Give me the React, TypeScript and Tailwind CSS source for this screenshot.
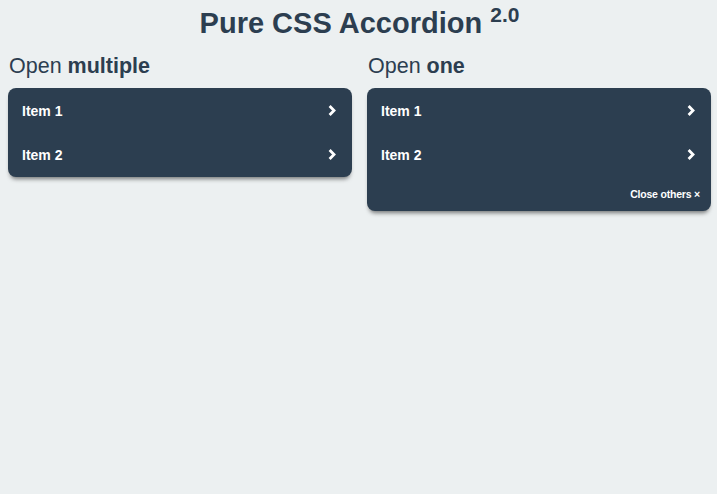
const items = ['Item 1', 'Item 2'];

function Chevron() {
  return (
    <svg width="8" height="11" viewBox="0 0 8 11" className="shrink-0">
      <path d="M1.6 1 L6 5.5 L1.6 10" fill="none" stroke="#ffffff" strokeWidth="2.8" strokeLinejoin="miter" />
    </svg>
  );
}

function Accordion({ closeRow }: { closeRow?: boolean }) {
  return (
    <div className="bg-[#2c3e50] rounded-[8px] overflow-hidden shadow-[0_4px_4px_-2px_rgba(0,0,0,0.5)] text-white">
      {items.map((label) => (
        <div key={label} className="h-[44.5px] flex items-center justify-between pl-[14px] pr-[16px]">
          <span className="text-[14px] font-bold translate-y-[0.5px]">{label}</span>
          <Chevron />
        </div>
      ))}
      {closeRow && (
        <div className="h-[34px] flex items-center justify-end pr-[11px]">
          <span className="text-[10.5px] font-bold tracking-[-0.2px] translate-y-[0.5px]">Close others ×</span>
        </div>
      )}
    </div>
  );
}

export default function App() {
  return (
    <div className="min-h-[494px] bg-[#ecf0f1] text-[#2c3e50] font-['Liberation_Sans',Arial,sans-serif] pl-[8px] pr-[6px]">
      <h1 className="text-center text-[29px] font-bold leading-[47px] m-0">
        Pure CSS Accordion{' '}
        <sup className="text-[21px] relative top-[-11px]">2.0</sup>
      </h1>
      <div className="flex gap-[15px]">
        <div className="flex-1">
          <h2 className="text-[21.5px] leading-[32px] mt-[3px] mb-[6px] pl-[1px]">
            Open <b>multiple</b>
          </h2>
          <Accordion />
        </div>
        <div className="flex-1">
          <h2 className="text-[21.5px] leading-[32px] mt-[3px] mb-[6px] pl-[1px]">
            Open <b>one</b>
          </h2>
          <Accordion closeRow />
        </div>
      </div>
    </div>
  );
}
